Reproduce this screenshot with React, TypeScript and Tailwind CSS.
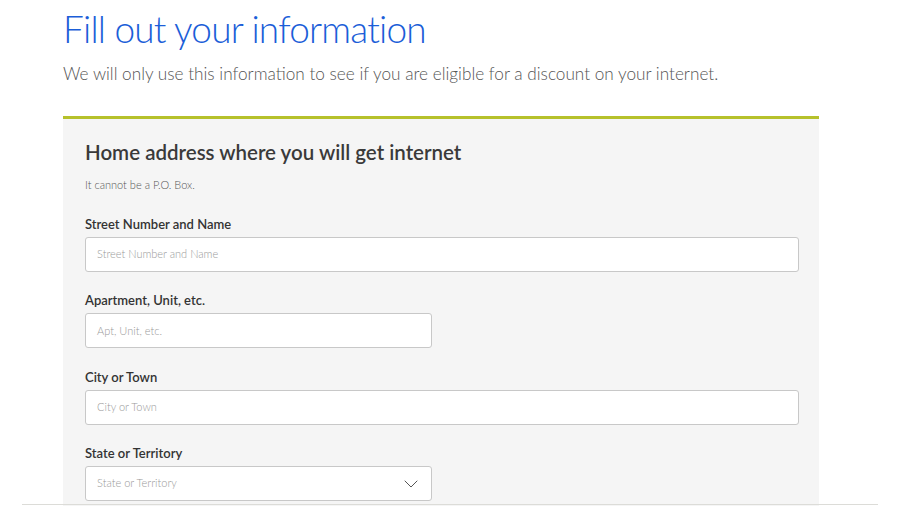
import { LuChevronDown } from 'react-icons/lu'

const FONT = { fontFamily: 'Lato, "Open Sans", sans-serif' }

function Field({ label, placeholder, wide, select }: { label: string; placeholder: string; wide?: boolean; select?: boolean }) {
  return (
    <div className="flex flex-col">
      <label className="mb-[4px] text-[13px] font-semibold leading-[18px] text-[#333]">{label}</label>
      <div
        className={`flex h-[35px] items-center justify-between rounded-[3px] border border-[#c8c8c8] bg-white pl-[11px] pr-[8px] ${
          wide ? 'w-[714px]' : 'w-[347px]'
        }`}
      >
        <span className="text-[11px] font-light text-[#9a9a9a]">{placeholder}</span>
        {select && <LuChevronDown size={24} strokeWidth={1} className="text-[#555]" />}
      </div>
    </div>
  )
}

export default function App() {
  return (
    <div className="relative h-[506px] w-[900px] overflow-hidden bg-white" style={FONT}>
      <div className="pl-[63px] pt-[6px]">
        <h1 className="text-[37px] font-light leading-[46px] tracking-[-0.8px] text-[#1b5ed8]">Fill out your information</h1>
        <p className="mt-[10px] text-[17.2px] font-light leading-[24px] text-[#555]">
          We will only use this information to see if you are eligible for a discount on your internet.
        </p>
        <div className="mt-[30px] w-[756px] border-t-[3px] border-[#b6c12b] bg-[#f5f5f5] pl-[22px] pt-[19px]">
          <h2 className="text-[20.5px] font-semibold leading-[28px] text-[#3a3a3a]">Home address where you will get internet</h2>
          <p className="mt-[12px] text-[11px] font-light leading-[14px] text-[#555]">It cannot be a P.O. Box.</p>
          <div className="mt-[23px] flex flex-col gap-[19.4px] pb-[10px]">
            <Field label="Street Number and Name" placeholder="Street Number and Name" wide />
            <Field label="Apartment, Unit, etc." placeholder="Apt, Unit, etc." />
            <Field label="City or Town" placeholder="City or Town" wide />
            <Field label="State or Territory" placeholder="State or Territory" select />
          </div>
        </div>
      </div>
      <div className="absolute bottom-[1px] left-[22px] h-px w-[856px] bg-[#dcdcd8]" />
    </div>
  )
}
